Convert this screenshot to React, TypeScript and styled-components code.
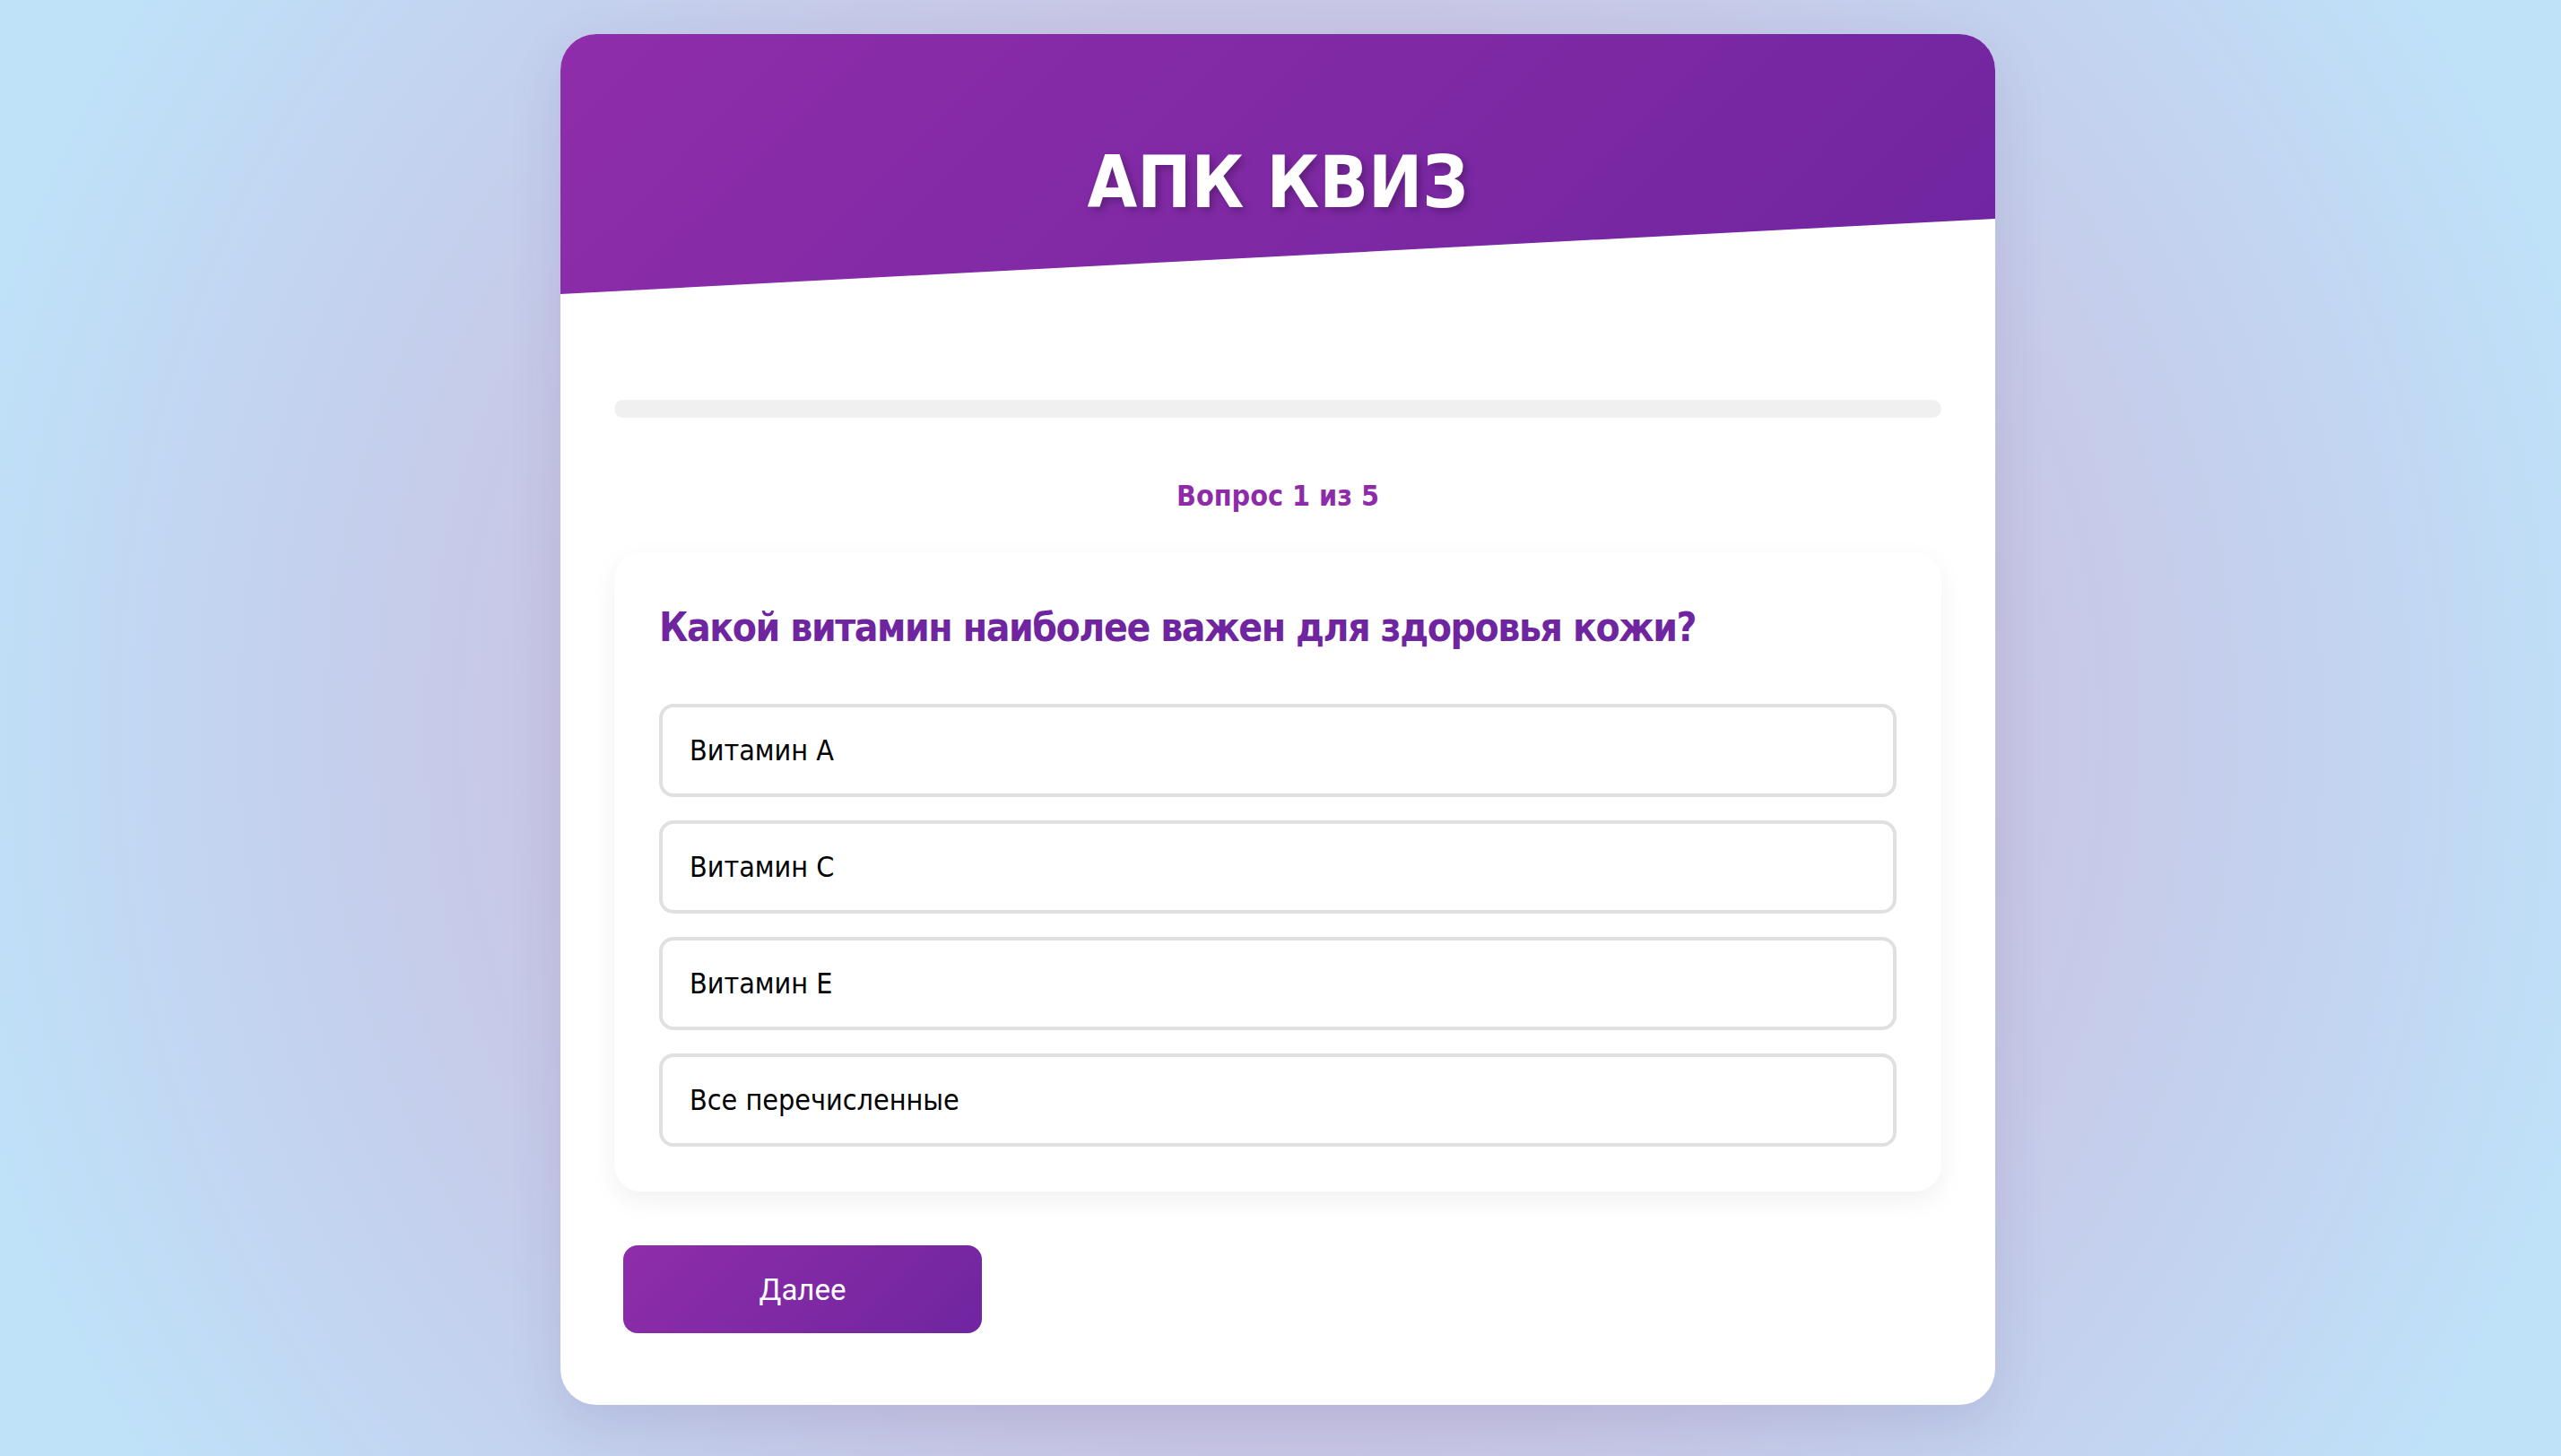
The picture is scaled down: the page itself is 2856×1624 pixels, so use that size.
import React from 'react'
import styled, { createGlobalStyle } from 'styled-components'

const GlobalStyle = createGlobalStyle`
    html, body {
        margin: 0;
        padding: 0;
    }
    body {
        min-height: 100vh;
        font-family: "DejaVu Sans Condensed", "DejaVu Sans", sans-serif;
        background: radial-gradient(circle at 50% 50%, #c9c5e4 0px, #c8c6e5 800px, #c2d6f2 1250px, #bfe2f9 1520px);
    }
`

const Page = styled.div`
    display: flex;
    justify-content: center;
    align-items: flex-start;
    padding: 38px 6px 56px 0;
    box-sizing: border-box;
    min-height: 100vh;
`

const Card = styled.div`
    width: 1600px;
    background: #ffffff;
    border-radius: 40px;
    overflow: hidden;
    box-shadow: 0 20px 60px rgba(60, 40, 110, 0.12);
`

const Header = styled.header`
    height: 290px;
    box-sizing: border-box;
    padding-top: 118px;
    background: linear-gradient(135deg, #8f2daa 0%, #7025a0 100%);
    clip-path: polygon(0 0, 100% 0, 100% 71%, 0 100%);
    text-align: center;
`

const Title = styled.h1`
    margin: 0;
    font-size: 80px;
    line-height: 96px;
    font-weight: 700;
    color: #ffffff;
    text-shadow: 4px 4px 8px rgba(0, 0, 0, 0.25);
`

const Body = styled.div`
    padding: 118px 60px 80px;
`

const Progress = styled.div`
    height: 20px;
    border-radius: 10px;
    background: #f0f0f0;
    overflow: hidden;
`

const ProgressFill = styled.div`
    height: 100%;
    background: linear-gradient(90deg, #8f2daa, #7025a0);
`

const Counter = styled.div`
    margin: 68px 0 44px;
    text-align: center;
    font-size: 32px;
    line-height: 38px;
    font-weight: 700;
    color: #8e2ba9;
`

const QuestionBox = styled.div`
    padding: 50px;
    border-radius: 30px;
    background: #ffffff;
    box-shadow: 0 10px 30px rgba(0, 0, 0, 0.06);
`

const QuestionText = styled.h2`
    margin: 6px 0 57px;
    font-size: 44px;
    line-height: 56px;
    font-weight: 700;
    letter-spacing: -1.4px;
    color: #7025a0;
`

const Options = styled.div`
    display: flex;
    flex-direction: column;
    gap: 26px;
`

const Option = styled.button`
    display: flex;
    align-items: center;
    height: 104px;
    padding: 0 30px;
    box-sizing: border-box;
    border: 4px solid #e0e0e0;
    border-radius: 16px;
    background: #ffffff;
    font-family: inherit;
    font-size: 32px;
    color: #000000;
    text-align: left;
    cursor: pointer;
`

const NextButton = styled.button`
    display: block;
    width: 400px;
    height: 98px;
    margin: 60px 0 0 10px;
    border: none;
    border-radius: 16px;
    background: linear-gradient(135deg, #8f2daa 0%, #7025a0 100%);
    color: #ffffff;
    font-family: Roboto, "Liberation Sans", sans-serif;
    font-size: 33px;
    cursor: pointer;
`

const options = ['Витамин A', 'Витамин C', 'Витамин E', 'Все перечисленные']

const App = (): React.ReactElement => {
    const current = 1
    const total = 5
    const progress = ((current - 1) / total) * 100

    return (
        <>
            <GlobalStyle />
            <Page>
                <Card>
                    <Header>
                        <Title>АПК КВИЗ</Title>
                    </Header>
                    <Body>
                        <Progress>
                            <ProgressFill style={{ width: `${progress}%` }} />
                        </Progress>
                        <Counter>
                            Вопрос {current} из {total}
                        </Counter>
                        <QuestionBox>
                            <QuestionText>Какой витамин наиболее важен для здоровья кожи?</QuestionText>
                            <Options>
                                {options.map((option) => (
                                    <Option key={option}>{option}</Option>
                                ))}
                            </Options>
                        </QuestionBox>
                        <NextButton>Далее</NextButton>
                    </Body>
                </Card>
            </Page>
        </>
    )
}

export default App
